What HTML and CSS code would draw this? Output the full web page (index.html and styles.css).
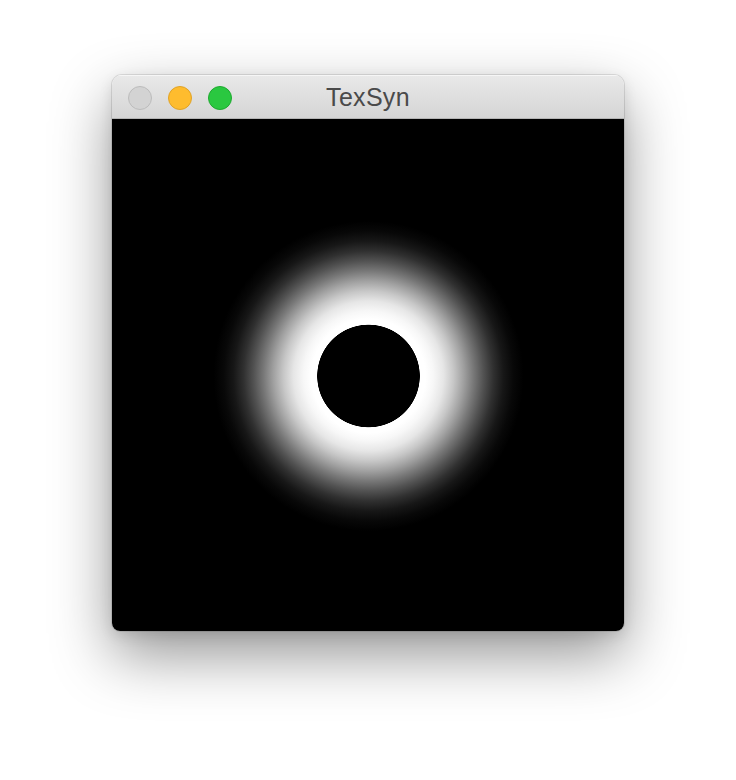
FILE: index.html
```html
<!DOCTYPE html>
<html>
<head>
<meta charset="utf-8">
<title>TexSyn</title>
<link rel="stylesheet" href="styles.css">
</head>
<body>
<div class="page">
  <div class="window">
    <div class="titlebar">
      <div class="lights">
        <span class="light close"></span>
        <span class="light min"></span>
        <span class="light max"></span>
      </div>
      <div class="title">TexSyn</div>
      <div class="spacer"></div>
    </div>
    <div class="canvas"></div>
  </div>
</div>
</body>
</html>
```
FILE: styles.css
```css
html, body {
  margin: 0;
  padding: 0;
  background: #ffffff;
}
.page {
  width: 736px;
  height: 780px;
  padding: 75px 0 0 112px;
  box-sizing: border-box;
}
.window {
  width: 512px;
  border-radius: 10px 10px 8px 8px;
  overflow: hidden;
  box-shadow: 0 0 0 1px rgba(0,0,0,0.10), 0 24px 60px rgba(0,0,0,0.42), 0 4px 14px rgba(0,0,0,0.10);
}
.titlebar {
  height: 43px;
  border-bottom: 1px solid #b4b4b4;
  background: linear-gradient(#e9e9e9, #d5d5d5);
  display: grid;
  grid-template-columns: 1fr auto 1fr;
  align-items: center;
  box-shadow: inset 0 1px 0 rgba(255,255,255,0.6);
}
.lights {
  display: flex;
  gap: 16px;
  padding-left: 16px;
  padding-top: 1px;
}
.light {
  width: 24px;
  height: 24px;
  border-radius: 50%;
  box-sizing: border-box;
}
.close { background: #d3d3d3; border: 1px solid #bcbcbc; }
.min { background: #febc2e; border: 1px solid #e0a327; }
.max { background: #2ac840; border: 1px solid #1eaa2f; }
.title {
  font-family: "Liberation Sans", Arial, sans-serif;
  font-size: 25px;
  color: #4a4a4a;
  line-height: 43px;
  padding-top: 1px;
  letter-spacing: 0.3px;
}
.canvas {
  height: 512px;
  background: radial-gradient(circle at 256.5px 257px,
    #000 0, #000 51px, #fff 51.6px, #fff 57px,
    #f7f7f7 65px, #e6e6e6 75px, #c7c7c7 85px, #a1a1a1 95px,
    #787878 105px, #525252 115px, #303030 125px, #171717 135px,
    #080808 145px, #000 155px);
}
```
